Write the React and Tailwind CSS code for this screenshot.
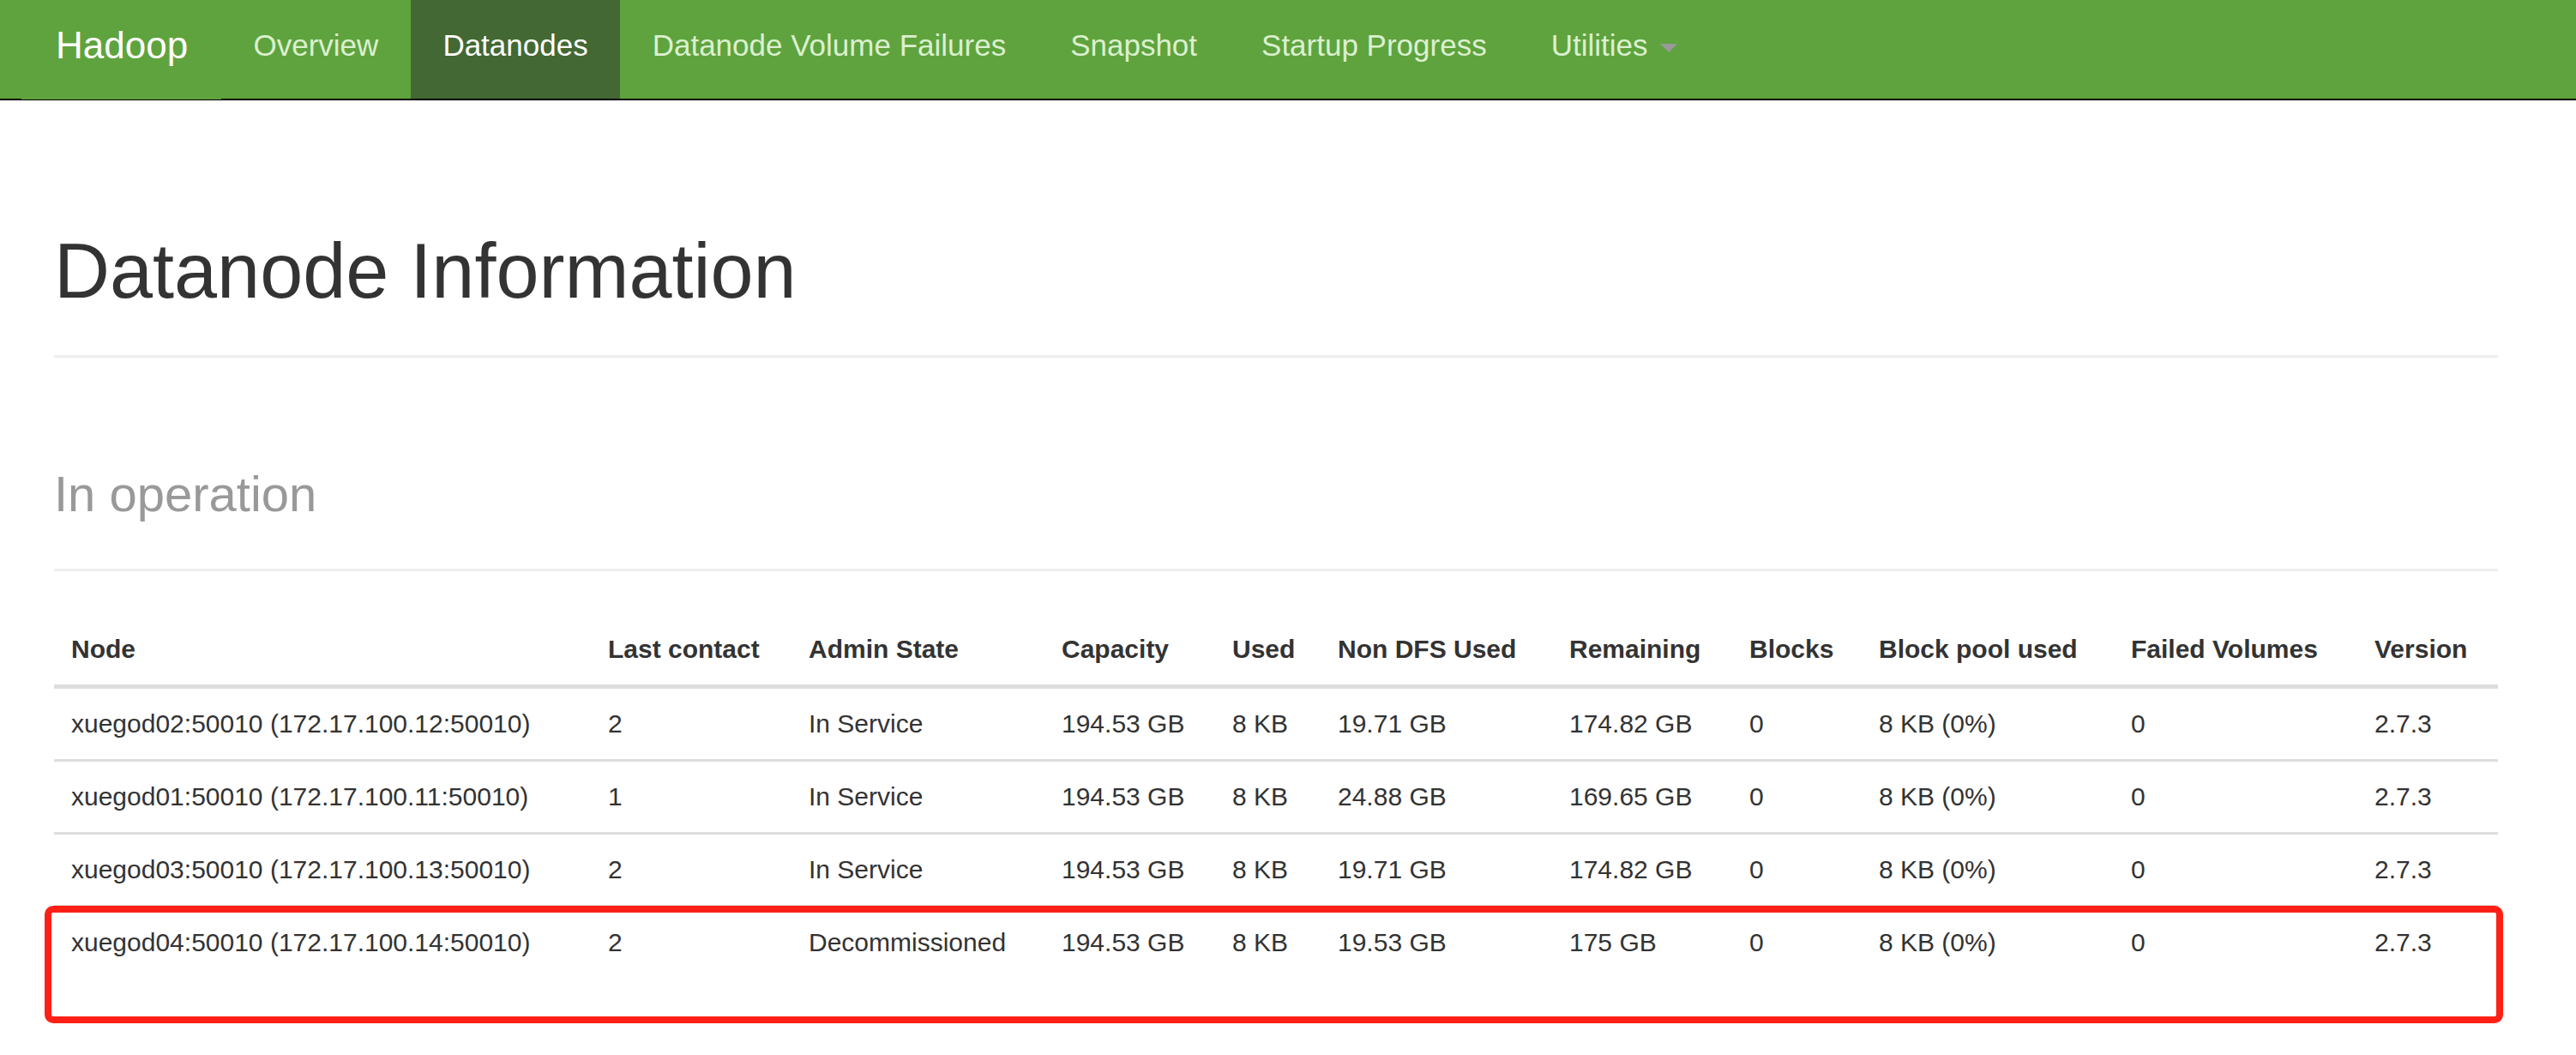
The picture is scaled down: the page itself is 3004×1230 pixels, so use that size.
const NAV = ['Overview', 'Datanodes', 'Datanode Volume Failures', 'Snapshot', 'Startup Progress'];

const HEAD = ['Node', 'Last contact', 'Admin State', 'Capacity', 'Used', 'Non DFS Used', 'Remaining', 'Blocks', 'Block pool used', 'Failed Volumes', 'Version'];

const ROWS = [
  ['xuegod02:50010 (172.17.100.12:50010)', '2', 'In Service', '194.53 GB', '8 KB', '19.71 GB', '174.82 GB', '0', '8 KB (0%)', '0', '2.7.3'],
  ['xuegod01:50010 (172.17.100.11:50010)', '1', 'In Service', '194.53 GB', '8 KB', '24.88 GB', '169.65 GB', '0', '8 KB (0%)', '0', '2.7.3'],
  ['xuegod03:50010 (172.17.100.13:50010)', '2', 'In Service', '194.53 GB', '8 KB', '19.71 GB', '174.82 GB', '0', '8 KB (0%)', '0', '2.7.3'],
  ['xuegod04:50010 (172.17.100.14:50010)', '2', 'Decommissioned', '194.53 GB', '8 KB', '19.53 GB', '175 GB', '0', '8 KB (0%)', '0', '2.7.3'],
];

const GRID = 'grid grid-cols-[626px_234px_295px_199px_123px_270px_210px_151px_294px_284px_164px]';

export default function App() {
  return (
    <div className="min-h-[1230px] bg-white font-['Liberation_Sans',Arial,Helvetica,sans-serif] text-[#333]">
      <nav className="flex h-[117px] border-b-2 border-black bg-[#5fa33e] pl-[25px]">
        <a className="relative z-10 h-[116px] w-[233px] shrink-0 self-start bg-[#5fa33e] pl-[40px] pt-[29px] text-[44px] leading-[48px] text-white">
          Hadoop
        </a>
        {NAV.map((item) => (
          <a
            key={item}
            className={
              item === 'Datanodes'
                ? 'shrink-0 whitespace-nowrap bg-[#436833] px-[37.5px] pt-[29px] text-[35px] leading-[48px] text-white'
                : 'shrink-0 whitespace-nowrap px-[37.5px] pt-[29px] text-[35px] leading-[48px] text-[#dbf0cf]'
            }
          >
            {item}
          </a>
        ))}
        <a className="flex shrink-0 items-start whitespace-nowrap px-[37.5px] pt-[29px] text-[35px] leading-[48px] text-[#dbf0cf]">
          <span>Utilities</span>
          <span className="ml-[15px] mt-[22px] h-0 w-0 border-x-[10px] border-t-[10px] border-x-transparent border-t-[#999]" />
        </a>
      </nav>

      <main className="w-[2913px] pl-[63px]">
        <h1 className="mt-[150px] border-b-[3px] border-[#eee] pb-[48px] text-[90px] font-normal leading-[99px]">
          Datanode Information
        </h1>
        <h3 className="mt-[127px] border-b-[3px] border-[#eee] pb-[55px] text-[58px] font-normal leading-[64px] text-[#999]">
          In operation
        </h3>

        <div className="mt-[50px] text-[30px] leading-[42px]">
          <div className={`${GRID} border-b-[5px] border-[#ddd] font-bold`}>
            {HEAD.map((h) => (
              <div key={h} className="whitespace-nowrap px-[20px] py-[20px]">
                {h}
              </div>
            ))}
          </div>
          {ROWS.map((row, i) => (
            <div
              key={row[0]}
              className={`${GRID} relative ${i === 0 ? '' : 'border-t-[3px] border-[#ddd]'}`}
            >
              {row.map((c, j) => (
                <div key={j} className="whitespace-nowrap px-[20px] py-[20px]">
                  {c}
                </div>
              ))}
              {i === 3 && (
                <div className="pointer-events-none absolute left-[-11px] top-[-2px] h-[137px] w-[2867px] rounded-[10px] border-[8px] border-[#fe2016]" />
              )}
            </div>
          ))}
        </div>
      </main>
    </div>
  );
}
